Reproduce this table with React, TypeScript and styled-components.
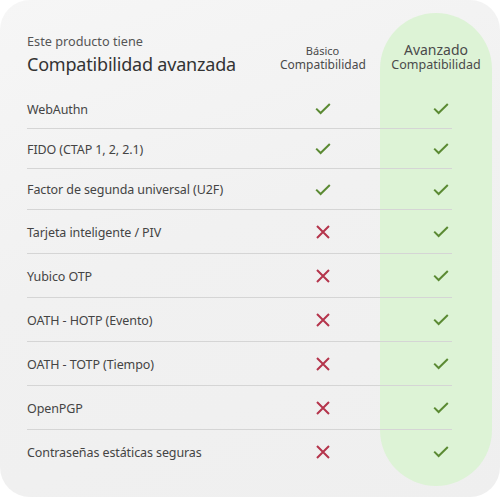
import React from 'react';
import styled, { createGlobalStyle } from 'styled-components';

const GlobalStyle = createGlobalStyle`
  html, body {
    margin: 0;
    padding: 0;
    background: #ffffff;
  }
  body {
    font-family: "Noto Sans", "Open Sans", sans-serif;
  }
`;

const COLS = '253px 85px 15px 112px';

const Card = styled.div`
  width: 500px;
  height: 497px;
  box-sizing: border-box;
  border-radius: 30px;
  background: linear-gradient(160deg, #f6f6f6 0%, #f1f1f1 45%, #efefef 100%);
  padding: 13px 0 0 27px;
  display: grid;
  grid-template-columns: 253px 100px 112px;
  grid-auto-rows: auto;
  align-content: start;
`;

const Highlight = styled.div`
  grid-column: 3;
  grid-row: 1 / 12;
  background: #ddf3d6;
  border-radius: 56px;
`;

const Header = styled.div`
  grid-column: 1 / 4;
  grid-row: 1;
  height: 76px;
  display: grid;
  grid-template-columns: ${COLS};
`;

const TitleBlock = styled.div`
  padding-top: 19px;
`;

const Eyebrow = styled.div`
  font-size: 12.7px;
  line-height: 18px;
  color: #555;
  white-space: nowrap;
`;

const Title = styled.div`
  margin-top: 2px;
  font-size: 18px;
  letter-spacing: -0.2px;
  line-height: 24px;
  color: #333;
  white-space: nowrap;
`;

const PlanHead = styled.div<{ $adv?: boolean }>`
  grid-column: ${p => (p.$adv ? 4 : 2)};
  padding-top: ${p => (p.$adv ? '29px' : '31px')};
  text-align: center;
  color: #4a4a4a;
  white-space: nowrap;
`;

const PlanName = styled.div<{ $adv?: boolean }>`
  font-size: ${p => (p.$adv ? '14px' : '11px')};
  line-height: ${p => (p.$adv ? '16px' : '14px')};
`;

const PlanSub = styled.div<{ $adv?: boolean }>`
  font-size: ${p => (p.$adv ? '12.5px' : '12px')};
  line-height: 14px;
`;

const Row = styled.div<{ $line: number; $h: number; $divider: boolean }>`
  grid-column: 1 / 4;
  grid-row: ${p => p.$line};
  height: ${p => p.$h}px;
  display: grid;
  grid-template-columns: ${COLS};
  align-items: center;
  background: ${p =>
    p.$divider
      ? 'linear-gradient(#d5d5d5, #d5d5d5) left bottom / 425px 1px no-repeat'
      : 'none'};
`;

const Label = styled.div`
  font-size: 12.5px;
  letter-spacing: -0.1px;
  color: #444;
  white-space: nowrap;
`;

const Mark = styled.div<{ $col: number }>`
  grid-column: ${p => p.$col};
  display: flex;
  justify-content: center;
  padding-left: ${p => (p.$col === 4 ? '9px' : '0')};
`;

const Spacer = styled.div`
  grid-column: 1 / 4;
  grid-row: 11;
  height: 12px;
`;

const Check = () => (
  <svg width="16" height="12" viewBox="0 0 16 12">
    <path d="M1.2 5.6 L5.6 10 L14.8 1" fill="none" stroke="#5b8a33" strokeWidth="2" />
  </svg>
);

const Cross = () => (
  <svg width="14" height="14" viewBox="0 0 14 14">
    <path d="M1 1 L13 13 M13 1 L1 13" fill="none" stroke="#b5354c" strokeWidth="2" />
  </svg>
);

const features: { name: string; basic: boolean; h: number }[] = [
  { name: 'WebAuthn', basic: true, h: 40 },
  { name: 'FIDO (CTAP 1, 2, 2.1)', basic: true, h: 40 },
  { name: 'Factor de segunda universal (U2F)', basic: true, h: 41 },
  { name: 'Tarjeta inteligente / PIV', basic: false, h: 44 },
  { name: 'Yubico OTP', basic: false, h: 44 },
  { name: 'OATH - HOTP (Evento)', basic: false, h: 44 },
  { name: 'OATH - TOTP (Tiempo)', basic: false, h: 44 },
  { name: 'OpenPGP', basic: false, h: 44 },
  { name: 'Contraseñas estáticas seguras', basic: false, h: 44 },
];

const App: React.FC = () => {
  return (
    <>
      <GlobalStyle />
      <Card>
        <Highlight />
        <Header>
          <TitleBlock>
            <Eyebrow>Este producto tiene</Eyebrow>
            <Title>Compatibilidad avanzada</Title>
          </TitleBlock>
          <PlanHead>
            <PlanName>Básico</PlanName>
            <PlanSub>Compatibilidad</PlanSub>
          </PlanHead>
          <PlanHead $adv>
            <PlanName $adv>Avanzado</PlanName>
            <PlanSub $adv>Compatibilidad</PlanSub>
          </PlanHead>
        </Header>
        {features.map((f, i) => (
          <Row key={f.name} $line={i + 2} $h={f.h} $divider={i < features.length - 1}>
            <Label>{f.name}</Label>
            <Mark $col={2}>{f.basic ? <Check /> : <Cross />}</Mark>
            <Mark $col={4}>
              <Check />
            </Mark>
          </Row>
        ))}
        <Spacer />
      </Card>
    </>
  );
};

export default App;
